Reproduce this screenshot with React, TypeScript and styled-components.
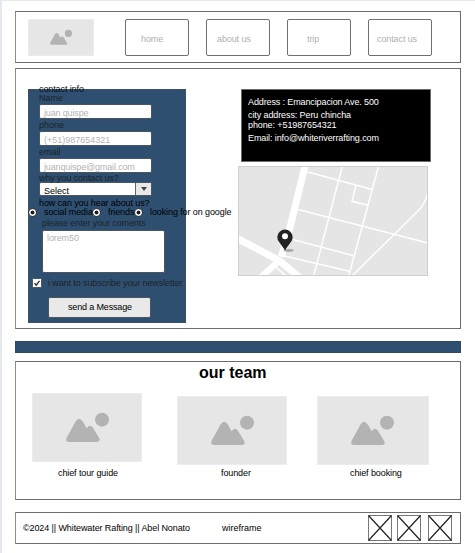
import React from "react";
import styled, { createGlobalStyle } from "styled-components";

const GlobalStyle = createGlobalStyle`
  *, *::before, *::after { box-sizing: border-box; }
  html { background: #fff; }
  body { margin: 0; font-family: "Liberation Sans", Arial, sans-serif; font-size: 9px; line-height: 10px; color: #000; }
`;

const Page = styled.div`
  height: 553px;
  border-top: 1px solid #e6e8ef;
  border-left: 2px solid #e4e8f1;
  padding: 10px 14px 0 13px;
  background: #fff;
  overflow: hidden;
`;

const Panel = styled.section<{ $height: number; $gap: number }>`
  display: flex;
  height: ${(p) => p.$height}px;
  margin-bottom: ${(p) => p.$gap}px;
  border: 1px solid #6c6c6c;
  border-left-color: #8c8c8c;
`;

const Text = styled.span<{ $track?: number; $color?: string }>`
  display: block;
  height: 10px;
  white-space: nowrap;
  letter-spacing: ${(p) => p.$track ?? -0.1}px;
  color: ${(p) => p.$color ?? "inherit"};
`;

const HeaderPanel = styled(Panel)`
  padding: 7px 0 0 12px;
`;

const Picture = styled.div<{ $width: number; $height: number }>`
  width: ${(p) => p.$width}px;
  height: ${(p) => p.$height}px;
  flex: none;
  background: #e6e6e6;
  border: 1px solid #ececec;
`;

const Nav = styled.nav`
  display: flex;
  gap: 17px;
  margin-left: 31px;
`;

const NavButton = styled.a<{ $indent: number }>`
  width: 64px;
  height: 37px;
  padding: 14px 0 0 ${(p) => p.$indent}px;
  border: 1px solid #707070;
  border-radius: 2px;
  color: #b0b0b0;
`;

const MainPanel = styled(Panel)`
  padding: 20px 0 0 12px;
`;

const Form = styled.form`
  width: 158px;
  height: 234px;
  flex: none;
  padding-left: 10px;
  border: 1px solid #3f505f;
  background: #2e4f70;
  color: #1c2329;
`;

const Heading = styled(Text)`
  height: 9px;
  margin-top: -6px;
  color: #0c1013;
`;

const Field = styled.div`
  width: 113px;
  height: 15px;
  margin: 1px 0;
  padding: 3px 0 0 4px;
  border: 1px solid #4a5560;
  border-radius: 2px;
  background: #fff;
  color: #b3b3b3;
`;

const ReasonLabel = styled(Text)`
  margin-top: -1px;
`;

const Select = styled.div`
  display: flex;
  justify-content: space-between;
  width: 113px;
  height: 14px;
  margin: -1px 0 2px;
  padding-left: 4px;
  border: 1px solid #4a5560;
  border-radius: 2px;
  background: #fff;
  color: #000;

  ${Text} { margin-top: 3px; }
`;

const SelectArrow = styled.div`
  display: flex;
  align-items: center;
  justify-content: center;
  width: 16px;
  border-left: 1px solid #666;
  background: #e8e8e8;

  &::after {
    content: "";
    border: 3px solid transparent;
    border-top: 4px solid #444;
    border-bottom: 0;
  }
`;

const Radios = styled.div`
  display: flex;
  height: 10px;
  margin: -1px 0 1px -11px;
  color: #000;
`;

const RadioOption = styled.div<{ $width: number }>`
  display: flex;
  gap: 7px;
  width: ${(p) => p.$width}px;
  flex: none;
`;

const RadioDot = styled.i`
  width: 9px;
  height: 9px;
  margin-top: 1px;
  flex: none;
  border: 1px solid #33393f;
  border-radius: 50%;
  background: radial-gradient(circle, #1c1c1c 0 1.6px, #fff 2.3px);
`;

const CommentsLabel = styled(Text)`
  margin-left: 3px;
`;

const Comments = styled.div`
  width: 123px;
  height: 43px;
  margin: 2px 0 5px 3px;
  padding: 2px 0 0 4px;
  border: 1px solid #4a5560;
  border-radius: 2px;
  background: #fff;
  color: #b3b3b3;
`;

const Subscribe = styled.label`
  display: flex;
  gap: 6px;
  height: 10px;
  margin-left: -7px;
`;

const CheckIcon = styled.svg`
  display: block;
  width: 10px;
  height: 10px;
`;

const Submit = styled.div`
  width: 103px;
  height: 21px;
  margin: 9px 0 0 9px;
  padding: 4px 0 0 19px;
  border: 1px solid #4a5560;
  border-radius: 2px;
  background: #e9e9e9;
  color: #000;
`;

const InfoColumn = styled.div`
  margin-left: 52px;
`;

const AddressCard = styled.address`
  width: 190px;
  height: 73px;
  margin: 0 0 4px 3px;
  padding: 7px 0 0 6px;
  border: 1px solid #6a6a6a;
  background: #000;
  color: #fff;
  font-style: normal;
`;

const AddressLine = styled(Text)<{ $after: number }>`
  margin-bottom: ${(p) => p.$after}px;
`;

const MapView = styled.svg`
  display: block;
  width: 190px;
  height: 110px;
`;

const Divider = styled.div`
  height: 12px;
  margin-bottom: 8px;
  border: 1px solid #34485b;
  background: #2e4f70;
`;

const TeamPanel = styled(Panel)`
  flex-direction: column;
`;

const Title = styled.h2`
  height: 18px;
  margin: 2px 0 0 183px;
  font-size: 16px;
  line-height: 18px;
`;

const Members = styled.div`
  display: flex;
  align-items: flex-end;
  margin: 11px 0 0 16px;
`;

const Member = styled.figure<{ $width: number; $after: number; $space: number }>`
  display: flex;
  flex-direction: column;
  gap: ${(p) => p.$space}px;
  width: ${(p) => p.$width}px;
  margin: 0 ${(p) => p.$after}px 0 0;
`;

const Caption = styled.figcaption<{ $indent: number }>`
  padding-left: ${(p) => p.$indent}px;
`;

const FooterPanel = styled(Panel)`
  align-items: center;
  padding-left: 7px;
`;

const FooterText = styled(Text)<{ $width: number }>`
  width: ${(p) => p.$width}px;
  flex: none;
`;

const SocialBox = styled.svg<{ $after: number }>`
  width: 24px;
  height: 26px;
  flex: none;
  margin-right: ${(p) => p.$after}px;
`;

function Placeholder({ width, height, icon, x, y }: { width: number; height: number; icon: number; x: number; y: number }) {
  return (
    <Picture $width={width} $height={height}>
      <svg
        width={width - 2}
        height={height - 2}
        viewBox={`0 0 ${width - 2} ${height - 2}`}
        display="block"
      >
        <g transform={`translate(${x} ${y}) scale(${icon / 129})`} fill="#b3b3b3">
          <circle cx="108" cy="20" r="21" />
          <path d="M2 74 L29 25 Q39 10 50 25 L62 46 Q70 32 80 43 L100 76 Q104 87 92 87 H10 Q-3 87 2 74Z" />
        </g>
      </svg>
    </Picture>
  );
}

const links = [
  { label: "home", indent: 15, track: -0.1 },
  { label: "about us", indent: 10, track: -0.1 },
  { label: "trip", indent: 19, track: -0.1 },
  { label: "contact us", indent: 8, track: -0.1 },
];

const fields = [
  { label: "Name", hint: "juan quispe", track: -0.15 },
  { label: "phone", hint: "(+51)987654321", track: 0 },
  { label: "email", hint: "juanquispe@gmail.com", track: -0.15 },
];

const sources = [
  { label: "social media", width: 64 },
  { label: "friends", width: 42 },
  { label: "looking for on google", width: 97 },
];

const team = [
  { role: "chief tour guide", width: 110, after: 35, space: 6, indent: 26 },
  { role: "founder", width: 110, after: 30, space: 3, indent: 44 },
  { role: "chief booking", width: 112, after: 0, space: 3, indent: 33 },
];

function StreetMap() {
  return (
    <MapView viewBox="18 18 570 330">
      <rect x="18" y="18" width="570" height="330" fill="#e5e5e5" />
      <g fill="none" stroke="#fff" strokeWidth="4.5">
        <path d="M220 15 L172 210 L148 290" strokeWidth="21" />
        <path d="M10 232 L142 302 L205 354" strokeWidth="21" />
        <path d="M142 302 L84 354" strokeWidth="19" />
        <path d="M228 36 L418 88 M331 18 L245 348 M440 18 L350 348 M372 76 L360 124 L406 135" />
        <path d="M195 148 L588 249 M180 238 L365 287 M158 288 L352 334 M132 322 L160 346" />
        <path d="M360 348 L558 153 Q585 125 588 90" />
      </g>
      <rect x="19.5" y="19.5" width="567" height="327" fill="none" stroke="#cecece" strokeWidth="3" />
      <ellipse cx="170" cy="271" rx="15" ry="5" fill="#aaa" />
      <path d="M159 271 L142 247 A23 23 0 1 1 176 247Z" fill="#222" />
      <circle cx="159" cy="229" r="9" fill="#fff" />
    </MapView>
  );
}

export default function App() {
  return (
    <>
      <GlobalStyle />
      <Page>
        <HeaderPanel as="header" $height={52} $gap={5}>
          <Placeholder width={66} height={37} icon={22} x={21} y={10} />
          <Nav>
            {links.map((l) => (
              <NavButton key={l.label} $indent={l.indent}>
                <Text $track={l.track}>{l.label}</Text>
              </NavButton>
            ))}
          </Nav>
        </HeaderPanel>

        <MainPanel as="main" $height={261} $gap={12}>
          <Form>
            <Heading>contact info</Heading>
            {fields.map((f) => (
              <React.Fragment key={f.label}>
                <Text $track={0}>{f.label}</Text>
                <Field>
                  <Text $track={f.track}>{f.hint}</Text>
                </Field>
              </React.Fragment>
            ))}
            <ReasonLabel>why you contact us?</ReasonLabel>
            <Select>
              <Text $track={0}>Select</Text>
              <SelectArrow />
            </Select>
            <Text $color="#000">how can you hear about us?</Text>
            <Radios>
              {sources.map((s) => (
                <RadioOption key={s.label} $width={s.width}>
                  <RadioDot />
                  <Text>{s.label}</Text>
                </RadioOption>
              ))}
            </Radios>
            <CommentsLabel>please enter your coments</CommentsLabel>
            <Comments>
              <Text>lorem50</Text>
            </Comments>
            <Subscribe>
              <CheckIcon viewBox="0 0 10 10">
                <rect x="0.5" y="0.5" width="9" height="9" rx="1" fill="#fff" stroke="#4a5560" />
                <path d="M2.5 5.2 L4.2 7.2 L7.5 2.8" fill="none" stroke="#222" strokeWidth="1.2" />
              </CheckIcon>
              <Text>i want to subscribe your newsletter</Text>
            </Subscribe>
            <Submit>
              <Text $track={-0.15}>send a Message</Text>
            </Submit>
          </Form>
          <InfoColumn>
            <AddressCard>
              <AddressLine $after={3} $track={-0.12}>Address : Emancipacion Ave. 500</AddressLine>
              <AddressLine $after={0}>city address: Peru chincha</AddressLine>
              <AddressLine $after={3}>phone: +51987654321</AddressLine>
              <AddressLine $after={0}>Email: info@whiteriverrafting.com</AddressLine>
            </AddressCard>
            <StreetMap />
          </InfoColumn>
        </MainPanel>

        <Divider />

        <TeamPanel $height={139} $gap={12}>
          <Title>our team</Title>
          <Members>
            {team.map((m) => (
              <Member key={m.role} $width={m.width} $after={m.after} $space={m.space}>
                <Placeholder width={m.width} height={69} icon={43} x={33} y={19} />
                <Caption $indent={m.indent}>
                  <Text>{m.role}</Text>
                </Caption>
              </Member>
            ))}
          </Members>
        </TeamPanel>

        <FooterPanel as="footer" $height={32} $gap={0}>
          <FooterText $width={199}>©2024 || Whitewater Rafting || Abel Nonato</FooterText>
          <FooterText $width={146} $track={0}>wireframe</FooterText>
          {[5, 7, 0].map((after, i) => (
            <SocialBox key={i} $after={after} viewBox="0 0 24 26">
              <rect x="0.5" y="0.5" width="23" height="25" fill="none" stroke="#777" />
              <path d="M0.5 0.5 L23.5 25.5 M23.5 0.5 L0.5 25.5" stroke="#222" strokeWidth="1.2" />
            </SocialBox>
          ))}
        </FooterPanel>
      </Page>
    </>
  );
}
